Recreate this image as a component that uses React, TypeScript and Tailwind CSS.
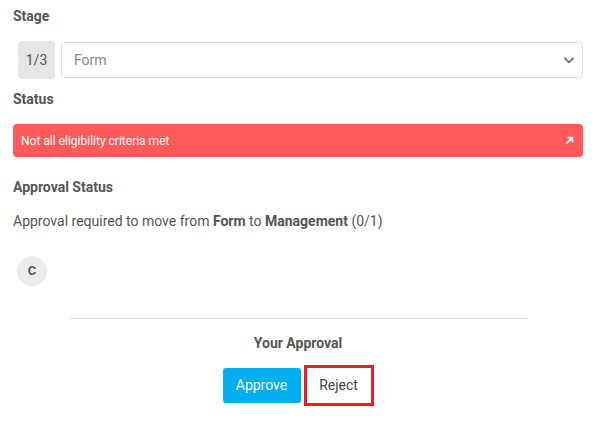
import React from 'react';

export default function App() {
  return (
    <div className="w-[599px] h-[421px] bg-white text-[#555] font-['Roboto',sans-serif] pl-[13px] pr-[16px] pt-[7px]">
      <div className="text-[14px] font-bold leading-[18px]">Stage</div>
      <div className="flex items-center gap-[6px] mt-[16px] pl-[5px]">
        <div className="w-[37px] h-[38px] rounded-[4px] bg-[#e6e6e6] flex items-center justify-center text-[14px] text-[#555]">
          1/3
        </div>
        <div className="flex-1 h-[36px] border border-[#dcdcdc] rounded-[4px] flex items-center justify-between pl-[12px] pr-[6px]">
          <span className="text-[14px] text-[#888]">Form</span>
          <svg width="14" height="14" viewBox="0 0 24 24" fill="none" stroke="#777" strokeWidth="3.2" strokeLinecap="round" strokeLinejoin="round">
            <path d="M5 9l7 7 7-7" />
          </svg>
        </div>
      </div>
      <div className="text-[14px] font-bold leading-[18px] mt-[11px]">Status</div>
      <div className="mt-[16px] h-[33px] rounded-[4px] bg-[#ff5a5a] flex items-center justify-between pl-[8px] pr-[9px]">
        <span className="text-[12px] text-white">Not all eligibility criteria met</span>
        <svg width="9" height="9" viewBox="0 0 10 10" fill="none" stroke="white" strokeWidth="2">
          <path d="M1.5 8.5L8 2" />
          <path d="M3 1.8h5.2V7" />
        </svg>
      </div>
      <div className="text-[14px] font-bold leading-[18px] mt-[21px]">Approval Status</div>
      <div className="text-[14px] leading-[18px] mt-[16px]">
        Approval required to move from <b>Form</b> to <b>Management</b> (0/1)
      </div>
      <div className="mt-[26px] pl-[4px]">
        <div className="w-[30px] h-[30px] rounded-full bg-[#ececec] flex items-center justify-center text-[13px] font-bold">
          C
        </div>
      </div>
      <div className="mx-[57px] mt-[32px] border-t border-[#d9d9d9]" />
      <div className="text-center text-[14px] font-bold leading-[18px] mt-[15px]">Your Approval</div>
      <div className="flex justify-center items-center gap-[3px] mt-[13px]">
        <button className="w-[78px] h-[35px] rounded-[3px] bg-[#00aeef] text-white text-[14px]">Approve</button>
        <button className="w-[70px] h-[41px] border-[3px] border-[#ed1c24] text-[14px] text-[#444] bg-white">Reject</button>
      </div>
    </div>
  );
}
